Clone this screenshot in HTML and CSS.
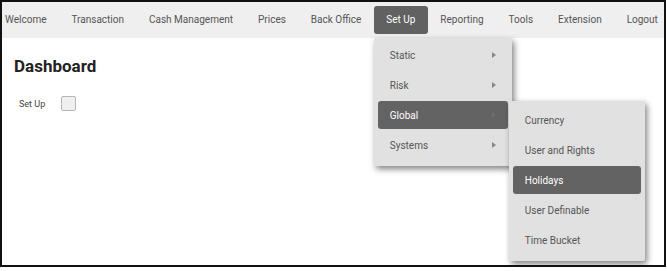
FILE: index.html
```html
<!DOCTYPE html>
<html lang="en">
<head>
  <meta charset="UTF-8">
  <title>Dashboard</title>
  <link rel="stylesheet" href="styles.css">
</head>
<body>
  <div class="frame">
    <nav class="topnav">
      <a href="#" class="first">Welcome</a>
      <a href="#">Transaction</a>
      <a href="#">Cash Management</a>
      <a href="#">Prices</a>
      <a href="#">Back Office</a>
      <div class="has-menu">
        <a href="#" class="active">Set Up</a>
        <ul class="menu menu-main">
          <li><span>Static</span><i class="arrow"></i></li>
          <li><span>Risk</span><i class="arrow"></i></li>
          <li class="selected">
            <span>Global</span><i class="arrow"></i>
            <ul class="menu menu-sub">
              <li><span>Currency</span></li>
              <li><span>User and Rights</span></li>
              <li class="selected"><span>Holidays</span></li>
              <li><span>User Definable</span></li>
              <li><span>Time Bucket</span></li>
            </ul>
          </li>
          <li><span>Systems</span><i class="arrow"></i></li>
        </ul>
      </div>
      <a href="#">Reporting</a>
      <a href="#">Tools</a>
      <a href="#">Extension</a>
      <a href="#">Logout</a>
    </nav>

    <main class="content">
      <h1>Dashboard</h1>
      <div class="field">
        <label for="setup">Set Up</label>
        <input type="checkbox" id="setup">
      </div>
    </main>
  </div>
</body>
</html>
```

FILE: styles.css
```css
body {
  margin: 0;
  padding: 0;
  background: #fff;
  font-family: Roboto, "Liberation Sans", sans-serif;
}

.frame {
  width: 662px;
  height: 263px;
  border: 2px solid #111;
  position: relative;
  overflow: hidden;
}

.topnav {
  display: flex;
  align-items: center;
  height: 36px;
  background-color: #efefef;
  white-space: nowrap;
}

.topnav a {
  display: block;
  flex-shrink: 0;
  color: #555;
  text-decoration: none;
  font-size: 10px;
  padding: 7px 12.5px;
  line-height: 14px;
}

.topnav a.first {
  padding-left: 3px;
}

.topnav a.active {
  background-color: #616161;
  color: #fff;
  border-radius: 3px;
}

.has-menu {
  position: relative;
  align-self: stretch;
  display: flex;
  align-items: center;
}

.menu {
  list-style: none;
  margin: 0;
  position: absolute;
  background-color: #e1e1e1;
  box-shadow: 2px 3px 6px rgba(0, 0, 0, 0.5);
  border-radius: 2px;
  z-index: 10;
}

.menu li {
  position: relative;
  display: flex;
  align-items: center;
  justify-content: space-between;
  height: 28px;
  margin: 2px 4px;
  padding: 0 12px;
  font-size: 10px;
  color: #555;
  border-radius: 3px;
}

.menu li.selected {
  background-color: #636363;
  color: #fff;
}

.menu-main {
  top: 100%;
  left: 0;
  width: 138px;
  padding: 1px 0 5px;
}

.menu-sub {
  top: 0;
  left: 131px;
  width: 136px;
  padding: 3px 0 5px;
}

.arrow {
  width: 0;
  height: 0;
  border-top: 3px solid transparent;
  border-bottom: 3px solid transparent;
  border-left: 4px solid #888;
}

.menu li.selected > .arrow {
  border-left-color: #6e6e6e;
}

.content {
  padding: 0 12px;
}

.content h1 {
  font-size: 17px;
  font-weight: bold;
  color: #222;
  margin: 18px 0 20px;
}

.field {
  display: flex;
  align-items: center;
  padding-left: 5px;
}

.field label {
  font-size: 9px;
  color: #444;
  width: 42px;
}

.field input {
  appearance: none;
  margin: 0;
  width: 15px;
  height: 15px;
  background: #efefef;
  border: 1px solid #b5b5b5;
  border-radius: 2px;
}
```
